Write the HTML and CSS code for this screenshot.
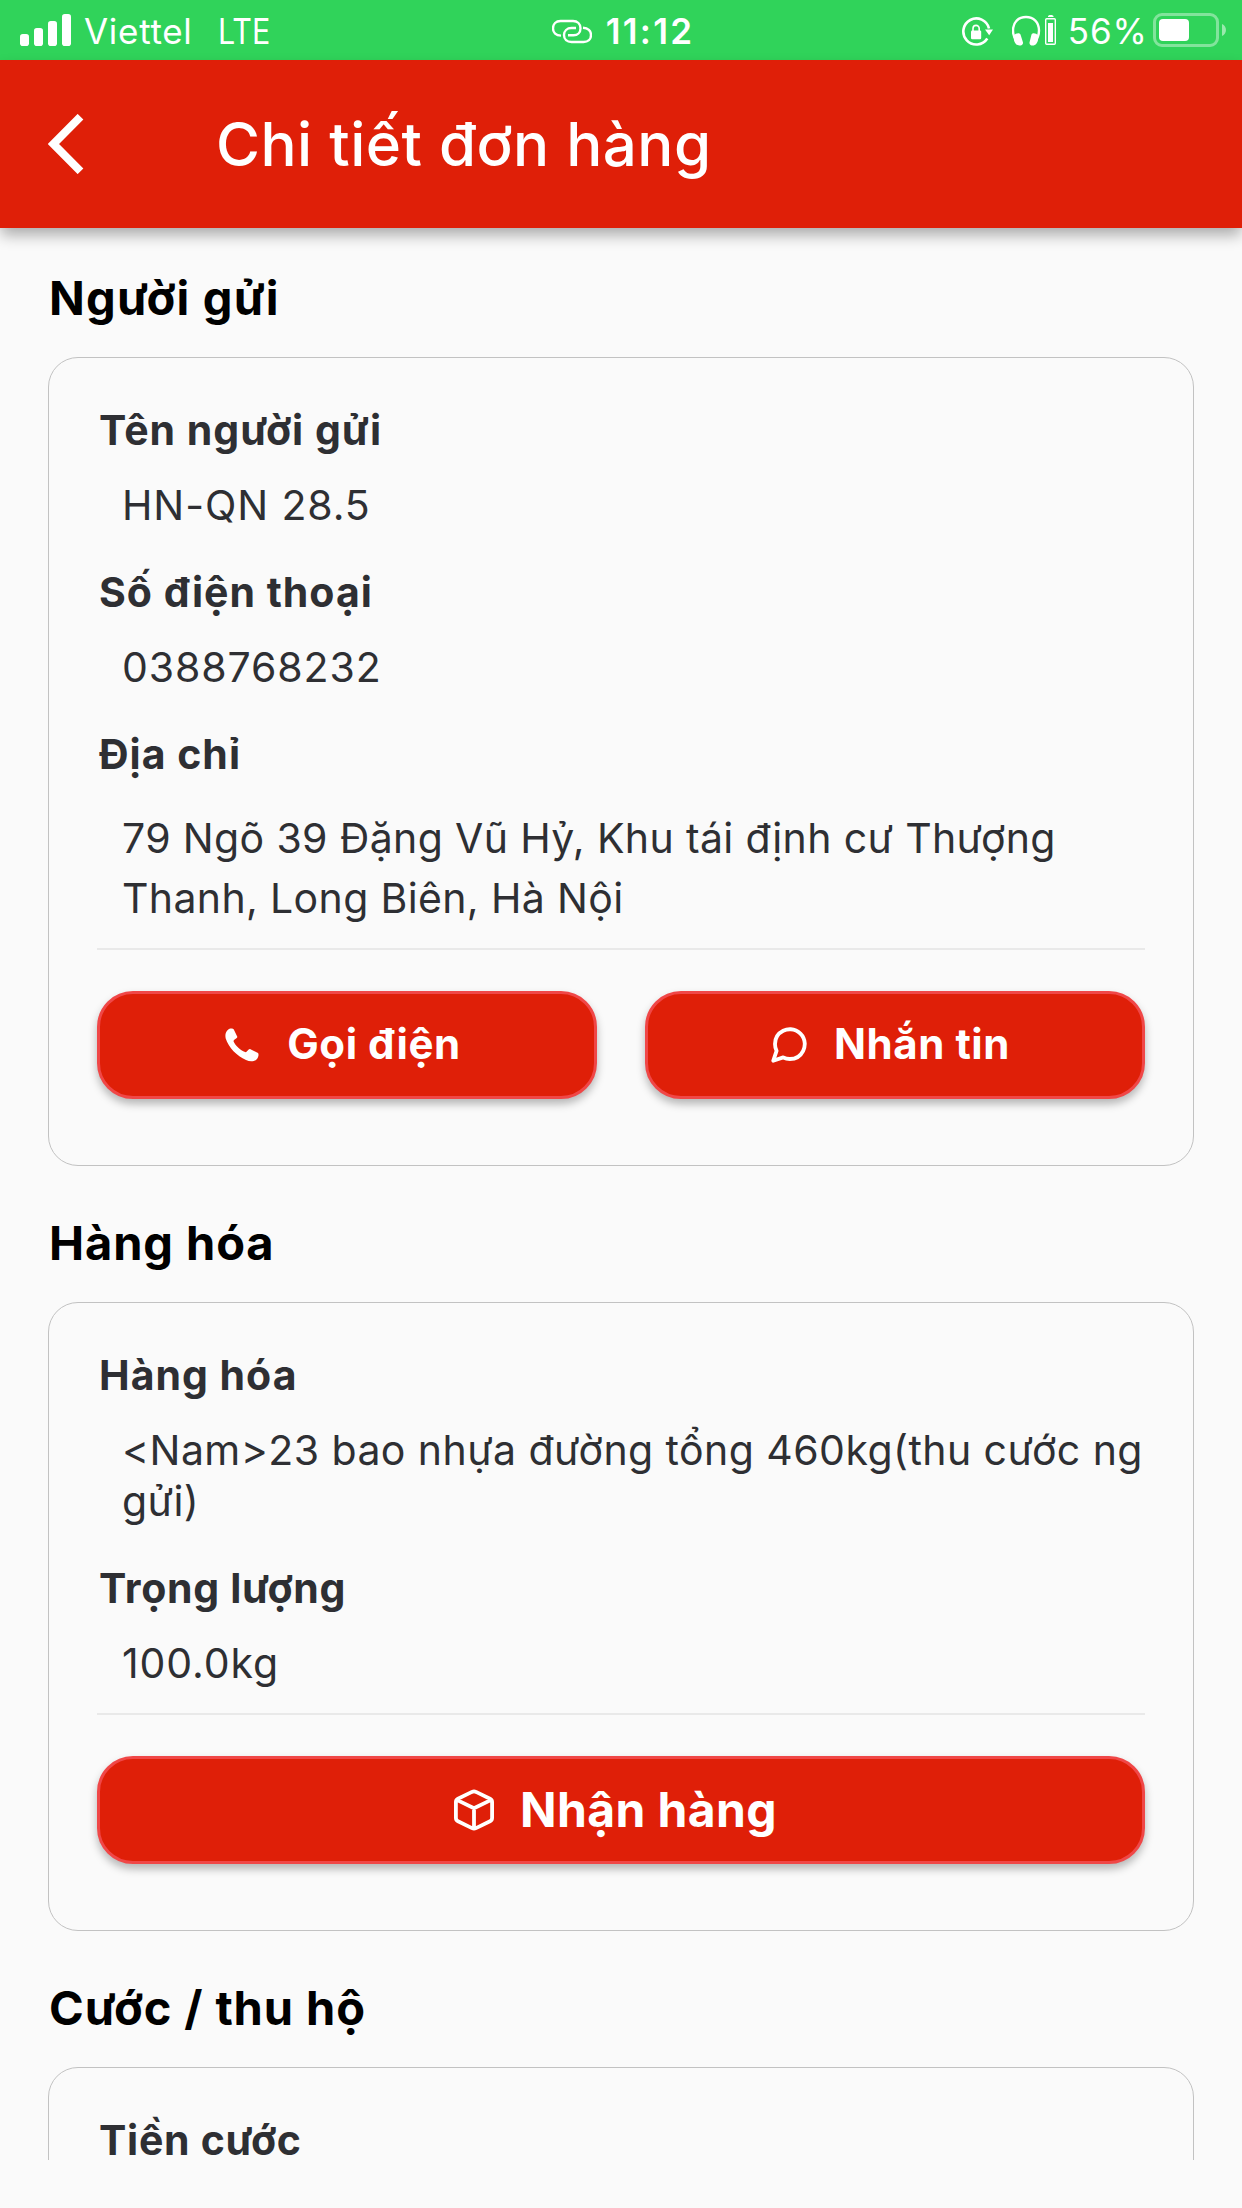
FILE: index.html
```html
<!DOCTYPE html>
<html lang="vi">
<head>
<meta charset="utf-8">
<title>Chi tiết đơn hàng</title>
<link rel="stylesheet" href="styles.css">
</head>
<body>
<div class="screen">
  <div class="status">
    <div class="status-left">
      <svg class="signal" width="51" height="60" viewBox="20 0 51 60" fill="#fff"><rect x="20" y="34" width="9" height="12" rx="2.8"/><rect x="34" y="28" width="9" height="18" rx="2.8"/><rect x="48" y="21" width="9" height="25" rx="2.8"/><rect x="62" y="14" width="9" height="32" rx="2.8"/></svg>
      <span class="carrier">Viettel</span>
      <span class="network">LTE</span>
    </div>
    <div class="status-center">
      <svg width="40" height="60" viewBox="551 0 40 60" fill="none" stroke="#fff" stroke-width="2.4" stroke-linecap="butt"><path d="M560 35.6C555 35.4 552 32.6 552 28.4C552 24 555 21 559.5 21H572C576.5 21 579.5 24 579.5 28.2C579.5 32.4 576.500 35.300 572.500 35.300H567"/><path d="M575 28H570.500C566 28 563 31 563 35C563 39.400 566 42 570.500 42H582.500C587 42 590 39.400 590 35C590 31 587 28 582 27.700"/></svg>
      <span class="clock">11:12</span>
    </div>
    <div class="status-right">
      <svg class="lock" width="32" height="60" viewBox="962 0 32 60" fill="none" stroke="#fff" stroke-width="2.6"><path d="M987.300 38.500A13 13 0 1 1 989 28.500"/><path d="M985 29.500H993L989.200 35.300Z" fill="#fff" stroke="none"/><rect x="971" y="30.500" width="10.200" height="8.700" rx="1.200" fill="#fff" stroke="none"/><path d="M973 31V28.500A3.100 3.100 0 0 1 979.200 28.500V31" stroke-width="1.600"/></svg>
      <svg class="headset" width="45" height="60" viewBox="1012 0 45 60" fill="#fff"><path d="M1017 41C1014.500 38.500 1013 34.500 1013 30.500C1013 22 1018.500 17 1026 17S1039 22 1039 30.500C1039 34.500 1037.500 38.500 1035 41" fill="none" stroke="#fff" stroke-width="2.400"/><path d="M1014 35.500C1016 32.700 1019.500 32.500 1020.500 34.500L1023 42.500C1023.500 45.500 1018 47 1015.500 43.500C1014 41.500 1013.300 38 1014 35.500ZM1038 35.500C1036 32.700 1032.500 32.500 1031.500 34.500L1029.500 42.500C1029 45.500 1034 47 1036.500 43.500C1038 41.500 1038.700 38 1038 35.500Z"/><rect x="1045.700" y="18.700" width="9.600" height="25.600" rx="1" fill="none" stroke="#fff" stroke-width="1.400"/><rect x="1048" y="23" width="5" height="19"/><path d="M1048 17V16L1049.500 15H1052L1053.500 16V17Z"/></svg>
      <span class="percent">56%</span>
      <svg class="battery" width="73" height="60" viewBox="1153 0 73 60"><rect x="1154.500" y="14.500" width="63" height="31" rx="7.500" fill="none" stroke="#fff" stroke-opacity=".4" stroke-width="3"/><rect x="1159" y="19" width="30" height="22" rx="4" fill="#fff"/><path d="M1222 24C1227.300 26 1227.300 34 1222 36Z" fill="#fff" fill-opacity=".5"/></svg>
    </div>
  </div>

  <header class="appbar">
    <svg class="back" width="36" height="60" viewBox="0 0 36 60" fill="none" stroke="#fff" stroke-width="8"><path d="M32.500 2.700L5.500 30L32.500 57.300"/></svg>
    <h1 class="title">Chi tiết đơn hàng</h1>
  </header>

  <main class="content">
    <h2 class="heading heading-wide">Người gửi</h2>
    <section class="card">
      <div class="field"><h3 class="label">Tên người gửi</h3><p class="value">HN-QN 28.5</p></div>
      <div class="field"><h3 class="label">Số điện thoại</h3><p class="value">0388768232</p></div>
      <div class="field"><h3 class="label">Địa chỉ</h3><p class="value value-address">79 Ngõ 39 Đặng Vũ Hỷ, Khu tái định cư Thượng Thanh, Long Biên, Hà Nội</p></div>
      <div class="actions actions-address">
        <button class="btn">
          <svg width="42" height="42" viewBox="-4 -4.500 42 42" fill="#fff"><path d="M3 1.200C4.500-.2 7.800-.3 8.800 1L12.300 8.300C12.500 9.500 8.300 11 8.500 12.800C10.500 17.500 15.500 22 20.800 23.700C22.300 23.500 23.300 20.300 25 20.600L33 24.600C34 25.600 33.600 28.600 32 30.500C29.500 33.300 25 33.400 21 31.600C12 27.500 3.500 19 .7 10C-.1 6.500 .6 3.200 3 1.200Z"/></svg>
          <span>Gọi điện</span>
        </button>
        <button class="btn">
          <svg width="42" height="42" viewBox="0 0 24 24" fill="none" stroke="#fff" stroke-width="2.2" stroke-linecap="round" stroke-linejoin="round"><path d="M21 11.500a8.380 8.380 0 0 1-.9 3.800 8.500 8.500 0 0 1-7.600 4.700 8.380 8.380 0 0 1-3.800-.9L3 21l1.900-5.700a8.380 8.380 0 0 1-.9-3.800 8.500 8.500 0 0 1 4.700-7.600 8.380 8.380 0 0 1 3.800-.9h.5a8.480 8.480 0 0 1 8 8v.5z"/></svg>
          <span>Nhắn tin</span>
        </button>
      </div>
    </section>

    <h2 class="heading">Hàng hóa</h2>
    <section class="card">
      <div class="field"><h3 class="label">Hàng hóa</h3><p class="value value-goods">&lt;Nam&gt;23 bao nhựa đường tổng 460kg(thu cước ng gửi)</p></div>
      <div class="field"><h3 class="label label-tight">Trọng lượng</h3><p class="value">100.0kg</p></div>
      <div class="actions">
        <button class="btn btn-large">
          <svg width="48" height="48" viewBox="-4 -3.500 48 48" fill="none" stroke="#fff" stroke-width="3.800" stroke-linecap="round" stroke-linejoin="round"><path d="M22 2.400L36 9.200C37.500 10 38.100 11 38.100 12.500V28.500C38.100 30 37.500 31 36 31.800L22 38.600Q20 39.500 18 38.600L4 31.800C2.500 31 1.900 30 1.900 28.500V12.500C1.900 11 2.500 10 4 9.200L18 2.400Q20 1.500 22 2.400ZM2.800 10.400L20 18.800L37.200 10.400M20 18.800V39"/></svg>
          <span>Nhận hàng</span>
        </button>
      </div>
    </section>

    <h2 class="heading">Cước / thu hộ</h2>
    <section class="card">
      <div class="field"><h3 class="label label-tight">Tiền cước</h3></div>
    </section>
  </main>
</div>
</body>
</html>
```

FILE: styles.css
```css
* { box-sizing: border-box; }

body {
  margin: 0;
  background: #fafafa;
  font-family: Inter, "Liberation Sans", sans-serif;
}

h1, h2, h3, p { margin: 0; }
svg { display: block; flex: none; }

.screen {
  display: flex;
  flex-direction: column;
  width: 1242px;
  height: 2208px;
  padding-bottom: 48px;
  overflow: hidden;
}

/* Status bar */
.status {
  flex: none;
  display: grid;
  grid-template-columns: 1fr auto 1fr;
  height: 60px;
  padding: 0 16px 0 20px;
  background: #30d35a;
  color: #fff;
  font-size: 35px;
  line-height: 62px;
  white-space: nowrap;
}
.status-left, .status-center, .status-right { display: flex; height: 60px; }
.status-right { justify-content: flex-end; }
.carrier { margin-left: 13px; letter-spacing: .7px; }
.network { margin-left: 25px; transform: scaleX(.87); transform-origin: left; }
.clock { margin-left: 14px; font-weight: 600; letter-spacing: 2.2px; }
.lock { margin-right: 18px; }
.headset { margin-right: 11px; }
.percent { letter-spacing: 1px; }
.battery { margin-left: 5px; }

/* App bar */
.appbar {
  flex: none;
  position: relative;
  z-index: 1;
  display: flex;
  align-items: center;
  gap: 132px;
  height: 168px;
  padding-left: 48px;
  background: #df1f08;
  color: #fff;
  box-shadow: 0 8px 14px -1px rgba(0, 0, 0, .32);
}
.title {
  font-size: 60px;
  font-weight: 550;
  line-height: 72px;
  letter-spacing: .5px;
}

/* Content */
.content {
  flex: 1;
  min-height: 0;
  padding: 40px 48px 0;
  overflow: hidden;
}
.heading {
  margin-bottom: 29px;
  padding-left: 1px;
  color: #000;
  font-size: 47px;
  font-weight: 680;
  line-height: 60px;
  letter-spacing: .9px;
}
.heading-wide { letter-spacing: 1.2px; }

.card {
  margin-bottom: 47px;
  padding: 47px 48px 66px;
  border: 1px solid #c2c2c2;
  border-radius: 30px;
}
.field + .field { margin-top: 36px; }
.label {
  padding-left: 2px;
  color: #2e2f33;
  font-size: 41px;
  font-weight: 680;
  line-height: 51px;
  letter-spacing: 1px;
}
.label-tight { letter-spacing: .7px; }
.value {
  margin-top: 24px;
  padding-left: 25px;
  color: #2e2f33;
  font-size: 41px;
  line-height: 51px;
  letter-spacing: .9px;
}
.value-address { margin-top: 28px; line-height: 60px; letter-spacing: .36px; }
.value-goods { letter-spacing: .44px; }

.actions {
  display: flex;
  gap: 48px;
  margin-top: 24px;
  padding-top: 41px;
  border-top: 2px solid #e9e9e9;
}
.actions-address { margin-top: 20px; }

.btn {
  flex: 1;
  display: flex;
  align-items: center;
  justify-content: center;
  gap: 24px;
  height: 108px;
  padding: 0 12px 0 0;
  border: 3px solid #f04747;
  border-radius: 36px;
  background: #df1f08;
  color: #fff;
  font: 700 42px/50px Inter, "Liberation Sans", sans-serif;
  letter-spacing: .55px;
  box-shadow: 0 5px 8px rgba(0, 0, 0, .28);
}
.btn span { padding-bottom: 2px; }
.btn-large {
  gap: 22px;
  padding-right: 15px;
  font-size: 48px;
  line-height: 58px;
  letter-spacing: .4px;
}
.btn-large span { padding-bottom: 0; }
```
